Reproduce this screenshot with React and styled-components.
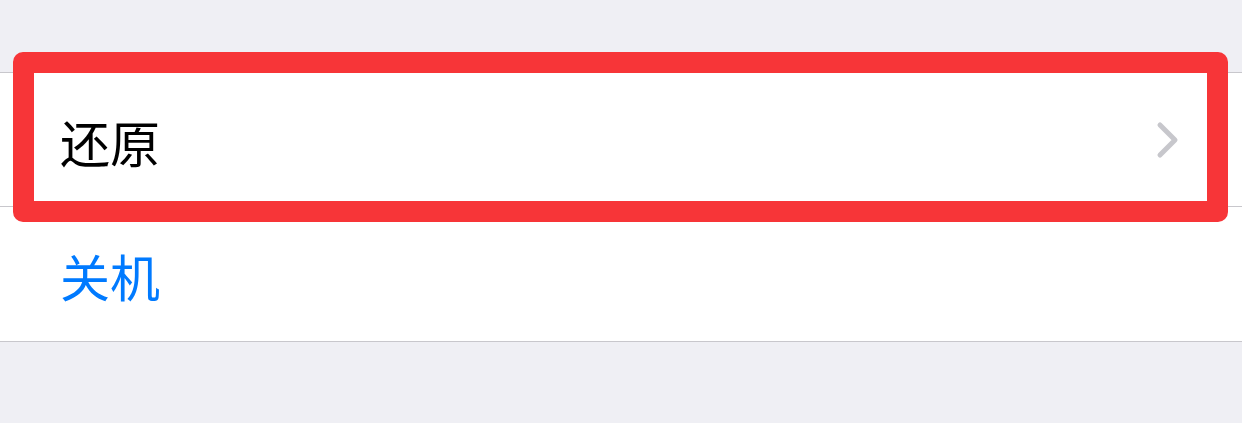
import React from "react";
import styled, { createGlobalStyle } from "styled-components";

const GlobalStyle = createGlobalStyle`
  html, body {
    margin: 0;
    padding: 0;
    background: #efeff4;
  }
  body {
    font-family: "Noto Sans CJK SC", "Noto Sans", sans-serif;
  }
`;

const Page = styled.div`
  width: 1242px;
  height: 423px;
  padding-top: 72px;
  box-sizing: border-box;
  background: #efeff4;
  overflow: hidden;
`;

const Group = styled.ul`
  list-style: none;
  margin: 0;
  padding: 0;
  background: #fff;
  border-top: 1px solid #c8c7cc;
  border-bottom: 1px solid #c8c7cc;
`;

const Row = styled.li`
  position: relative;
  display: flex;
  align-items: center;
  justify-content: space-between;
  height: ${(p) => p.h}px;
  padding: 0 62px 0 60px;
  font-size: 50px;
  color: ${(p) => (p.action ? "#007aff" : "#000")};

  & + & {
    border-top: 1px solid #c8c7cc;
  }
`;

const Label = styled.span`
  line-height: 1;
  margin-top: ${(p) => p.shift || 0}px;
`;

const Highlight = styled.div`
  position: absolute;
  z-index: 2;
  top: -21px;
  left: 13px;
  right: 14px;
  bottom: -16px;
  border: 21px solid #f73538;
  border-radius: 10px;
  pointer-events: none;
`;

const Chevron = () => (
  <svg width="24" height="38" viewBox="0 0 24 38">
    <path
      d="M4 4 L19 19 L4 34"
      fill="none"
      stroke="#c7c7cc"
      strokeWidth="5"
      strokeLinecap="round"
      strokeLinejoin="round"
    />
  </svg>
);

export default function App() {
  return (
    <>
      <GlobalStyle />
      <Page>
        <Group>
          <Row h={133}>
            <Label shift={2}>还原</Label>
            <Chevron />
            <Highlight />
          </Row>
          <Row h={134} action>
            <Label shift={2}>关机</Label>
          </Row>
        </Group>
      </Page>
    </>
  );
}
